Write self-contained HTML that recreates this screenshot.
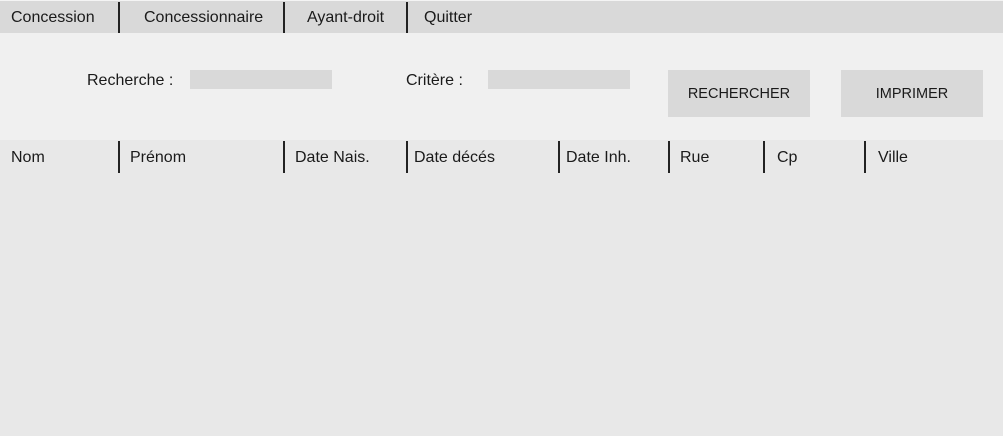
<!DOCTYPE html>
<html><head><meta charset="utf-8"><style>
*{margin:0;padding:0;box-sizing:border-box}
body{width:1003px;height:436px;background:#e8e8e8;font-family:"Liberation Sans",sans-serif;font-size:16px;color:#1a1a1a;position:relative;overflow:hidden}
.a{position:absolute}
.t{position:absolute;white-space:nowrap;line-height:18px}
.v{position:absolute;width:2px;background:#222}
</style></head><body>
<div class="a" style="left:0;top:0;width:1003px;height:1px;background:#f4f4f4"></div>
<div class="a" style="left:0;top:1px;width:1003px;height:32px;background:#d9d9d9"></div>
<div class="t" style="left:11px;top:9px">Concession</div>
<div class="v" style="left:118px;top:2px;height:31px"></div>
<div class="t" style="left:144px;top:9px">Concessionnaire</div>
<div class="v" style="left:283px;top:2px;height:31px"></div>
<div class="t" style="left:307px;top:9px">Ayant-droit</div>
<div class="v" style="left:406px;top:2px;height:31px"></div>
<div class="t" style="left:424px;top:9px">Quitter</div>
<div class="a" style="left:0;top:33px;width:1003px;height:107px;background:#f0f0f0"></div>
<div class="t" style="left:87px;top:72px">Recherche :</div>
<div class="a" style="left:190px;top:70px;width:142px;height:19px;background:#d9d9d9"></div>
<div class="t" style="left:406px;top:72px">Critère :</div>
<div class="a" style="left:488px;top:70px;width:142px;height:19px;background:#d9d9d9"></div>
<div class="a" style="left:668px;top:70px;width:142px;height:47px;background:#d9d9d9;text-align:center;line-height:49px;font-size:14.5px">RECHERCHER</div>
<div class="a" style="left:841px;top:70px;width:142px;height:47px;background:#d9d9d9;text-align:center;line-height:49px;font-size:14.5px">IMPRIMER</div>
<div class="t" style="left:11px;top:149px">Nom</div>
<div class="v" style="left:118px;top:141px;height:32px"></div>
<div class="t" style="left:130px;top:149px">Prénom</div>
<div class="v" style="left:283px;top:141px;height:32px"></div>
<div class="t" style="left:295px;top:149px">Date Nais.</div>
<div class="v" style="left:406px;top:141px;height:32px"></div>
<div class="t" style="left:414px;top:149px">Date décés</div>
<div class="v" style="left:558px;top:141px;height:32px"></div>
<div class="t" style="left:566px;top:149px">Date Inh.</div>
<div class="v" style="left:668px;top:141px;height:32px"></div>
<div class="t" style="left:680px;top:149px">Rue</div>
<div class="v" style="left:763px;top:141px;height:32px"></div>
<div class="t" style="left:777px;top:149px">Cp</div>
<div class="v" style="left:864px;top:141px;height:32px"></div>
<div class="t" style="left:878px;top:149px">Ville</div>
</body></html>
